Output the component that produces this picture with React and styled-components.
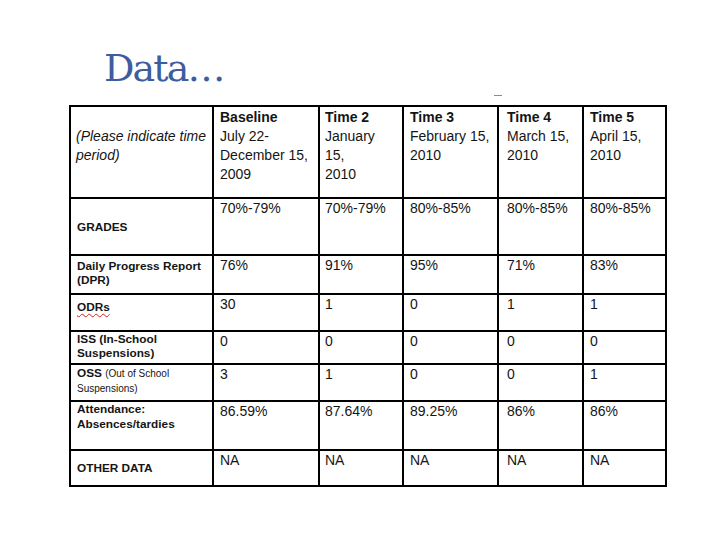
import React from "react";
import styled, { createGlobalStyle } from "styled-components";

const GlobalStyle = createGlobalStyle`
  html, body { margin: 0; padding: 0; background: #ffffff; }
  #root { width: 720px; height: 540px; }
`;

const Slide = styled.div`
  width: 720px;
  height: 540px;
  display: flex;
  flex-direction: column;
  background: #ffffff;
  font-family: "Liberation Sans", Arial, sans-serif;
  color: #151515;
  overflow: hidden;
`;

const Title = styled.h1`
  margin: 0;
  padding: 47px 0 0 104px;
  font-family: "DejaVu Serif", "Liberation Serif", serif;
  font-weight: 400;
  font-size: 38px;
  line-height: 42px;
  color: #3d5d9f;
  letter-spacing: -1.9px;
`;

const Spacer = styled.div`
  height: 16px;
  display: flex;
  align-items: flex-start;
  padding-left: 494px;
`;

const Dash = styled.span`
  display: block;
  width: 8px;
  height: 1px;
  margin-top: 6px;
  background: #8a8a8a;
`;

const Table = styled.div`
  margin-left: 69px;
  width: fit-content;
  display: grid;
  grid-template-columns: 141px 104px 82px 93px 83px 81px;
  grid-template-rows: 90px 55px 37px 35px 31px 35px 47px 34px;
  column-gap: 2px;
  row-gap: 2px;
  border: 2px solid #000;
  background: #000;
`;

const Cell = styled.div`
  background: #ffffff;
  overflow: hidden;
  white-space: nowrap;
`;

const HeadCell = styled(Cell)`
  padding: ${(p) => p.$pt}px 3px 0 ${(p) => p.$pl}px;
  font-size: 14px;
  line-height: 19px;
  font-style: ${(p) => (p.$italic ? "italic" : "normal")};
`;

const Strong = styled.span`
  font-weight: 700;
`;

const LabelCell = styled(Cell)`
  display: flex;
  flex-direction: column;
  justify-content: ${(p) => (p.$center ? "center" : "flex-start")};
  padding: ${(p) => p.$pt}px 3px 0 6px;
  font-size: 11.8px;
  line-height: ${(p) => p.$lh}px;
  font-weight: 700;
`;

const Small = styled.span`
  font-size: 10px;
  font-weight: 400;
  line-height: 14px;
`;

const Squiggle = styled.span`
  text-decoration: underline wavy #d02020;
  text-decoration-thickness: 1px;
  text-underline-offset: 2px;
`;

const ValueCell = styled(Cell)`
  padding: ${(p) => p.$pt}px 3px 0 ${(p) => p.$pl}px;
  font-size: 14px;
  line-height: 19px;
`;

const pads = [6, 5, 6, 8, 6];

const headers = [
  ["Baseline", "July 22-", "December 15,", "2009"],
  ["Time 2", "January", "15,", "2010"],
  ["Time 3", "February 15,", "2010"],
  ["Time 4", "March 15,", "2010"],
  ["Time 5", "April 15,", "2010"],
];

const rows = [
  {
    label: ["GRADES"],
    center: true,
    pt: 0,
    lh: 14,
    vpt: 0,
    values: ["70%-79%", "70%-79%", "80%-85%", "80%-85%", "80%-85%"],
  },
  {
    label: ["Daily Progress Report", "(DPR)"],
    pt: 3,
    lh: 14,
    vpt: 0,
    values: ["76%", "91%", "95%", "71%", "83%"],
  },
  {
    label: [<Squiggle key="o">ODRs</Squiggle>],
    pt: 5,
    lh: 14,
    vpt: 0,
    values: ["30", "1", "0", "1", "1"],
  },
  {
    label: ["ISS (In-School", "Suspensions)"],
    pt: 0,
    lh: 14,
    vpt: 0,
    values: ["0", "0", "0", "0", "0"],
  },
  {
    label: [
      <span key="a">
        OSS <Small>(Out of School</Small>
      </span>,
      <Small key="b">Suspensions)</Small>,
    ],
    pt: 1,
    lh: 14,
    vpt: 0,
    values: ["3", "1", "0", "0", "1"],
  },
  {
    label: ["Attendance:", "Absences/tardies"],
    pt: 0,
    lh: 15,
    vpt: 0,
    values: ["86.59%", "87.64%", "89.25%", "86%", "86%"],
  },
  {
    label: ["OTHER DATA"],
    center: true,
    pt: 0,
    lh: 14,
    vpt: 0,
    values: ["NA", "NA", "NA", "NA", "NA"],
  },
];

export default function App() {
  return (
    <>
      <GlobalStyle />
      <Slide>
        <Title>Data…</Title>
        <Spacer>
          <Dash />
        </Spacer>
        <Table>
          <HeadCell $pt={20} $pl={5} $italic>
            (Please indicate time
            <br />
            period)
          </HeadCell>
          {headers.map((h, i) => (
            <HeadCell key={i} $pt={1} $pl={pads[i]}>
              <Strong>{h[0]}</Strong>
              {h.slice(1).map((line, j) => (
                <React.Fragment key={j}>
                  <br />
                  {line}
                </React.Fragment>
              ))}
            </HeadCell>
          ))}
          {rows.map((r, ri) => (
            <React.Fragment key={ri}>
              <LabelCell $center={r.center} $pt={r.pt} $lh={r.lh}>
                {r.label.map((l, li) => (
                  <div key={li}>{l}</div>
                ))}
              </LabelCell>
              {r.values.map((v, vi) => (
                <ValueCell key={vi} $pt={r.vpt} $pl={pads[vi]}>
                  {v}
                </ValueCell>
              ))}
            </React.Fragment>
          ))}
        </Table>
      </Slide>
    </>
  );
}
